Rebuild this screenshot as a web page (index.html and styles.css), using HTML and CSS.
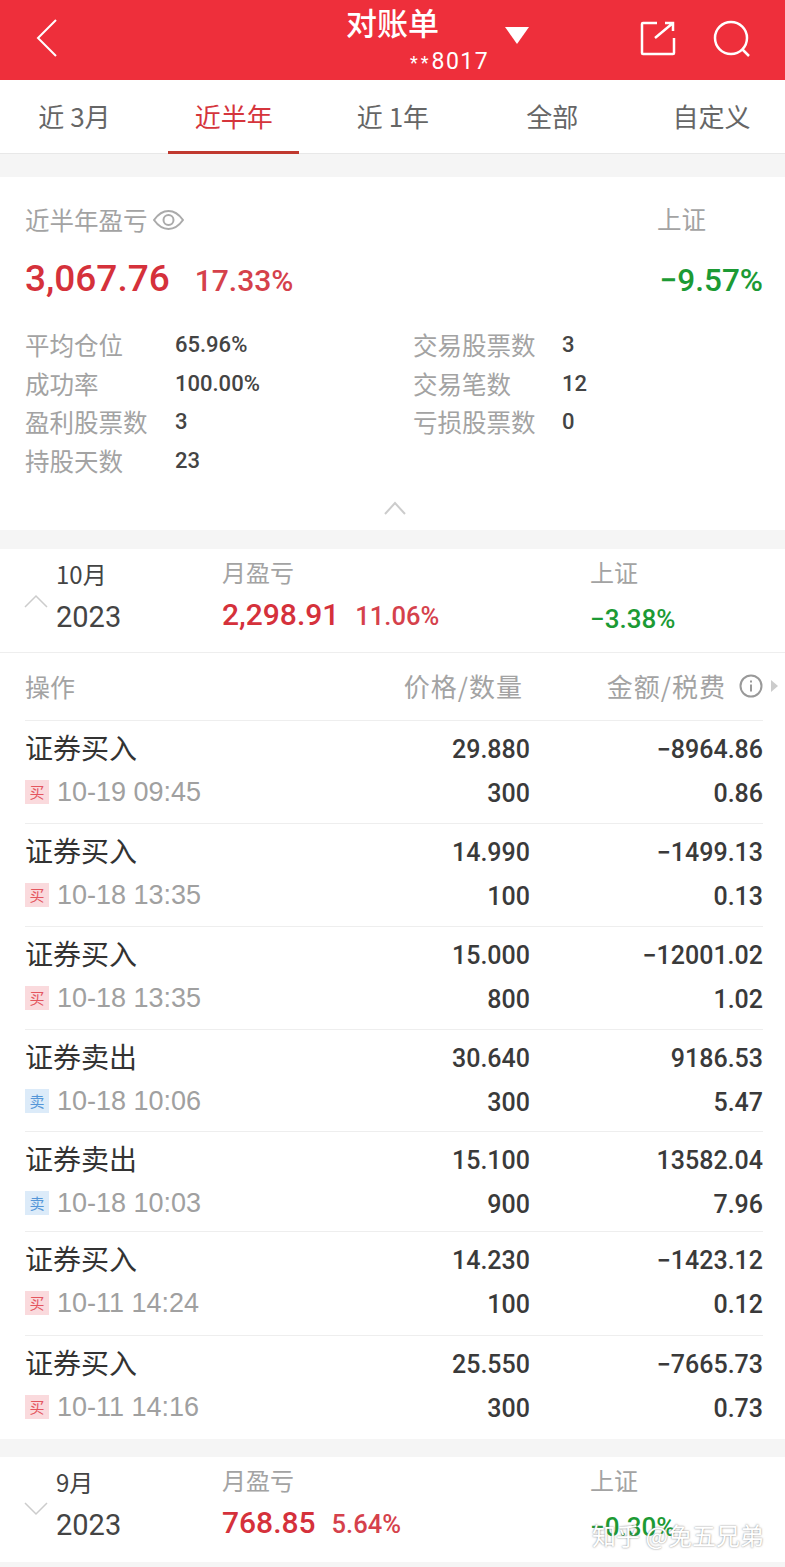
FILE: index.html
```html
<!DOCTYPE html>
<html lang="zh-CN">
  <head>
    <meta charset="UTF-8" />
    <meta name="viewport" content="width=device-width, initial-scale=1.0" />
    <title>对账单</title>
    <link rel="stylesheet" href="styles.css">
  </head>
  <body>
    <header class="topbar">
      <svg class="back-icon" width="24" height="40" viewBox="0 0 24 40"><path d="M21 2 3 20l18 18" /></svg>
      <div class="account">
        <div class="account-name">对账单</div>
        <div class="account-no"><span class="stars">**</span>8017</div>
      </div>
      <svg class="drop-icon" width="24" height="17" viewBox="0 0 24 17"><path d="M0 0h24L12 17z" /></svg>
      <div class="topbar-actions">
        <svg width="36" height="36" viewBox="0 0 36 36"><path d="M17 3H3a1 1 0 0 0-1 1v29a1 1 0 0 0 1 1h30a1 1 0 0 0 1-1V18M15 18 33 3M25 3h8v8" /></svg>
        <svg width="38" height="38" viewBox="0 0 38 38"><circle cx="18" cy="18" r="16" /><path d="m29 29 7 7" /></svg>
      </div>
    </header>

    <nav class="tabs">
      <div class="tab">近 3月</div>
      <div class="tab active">近半年</div>
      <div class="tab">近 1年</div>
      <div class="tab">全部</div>
      <div class="tab">自定义</div>
    </nav>

    <section class="summary">
      <div class="summary-head">
        <div class="summary-label">近半年盈亏
          <svg class="eye-icon" width="31" height="20" viewBox="0 0 31 20"><path d="M1 10C6 3 10 1 15.500 1S25 3 30 10c-5 7-9 9-14.500 9S6 17 1 10z" /><circle cx="15.500" cy="10" r="5" /></svg>
        </div>
        <div class="summary-label index-label">上证</div>
      </div>
      <div class="summary-main">
        <div class="big-money">3,067.76</div>
        <div class="big-rate">17.33%</div>
        <div class="big-index">−9.57%</div>
      </div>
      <div class="stats">
        <span>平均仓位</span><b>65.96%</b><span>交易股票数</span><b>3</b>
        <span>成功率</span><b>100.00%</b><span>交易笔数</span><b>12</b>
        <span>盈利股票数</span><b>3</b><span>亏损股票数</span><b>0</b>
        <span>持股天数</span><b>23</b>
      </div>
      <svg class="fold-icon" width="22" height="14" viewBox="0 0 22 14"><path d="m1 13 10-11 10 11" /></svg>
    </section>

    <section class="month">
      <svg class="month-arrow" width="24" height="14" viewBox="0 0 24 14"><path d="m1 13 11-11 11 11" /></svg>
      <div class="month-date"><div class="month-m">10月</div><div class="month-y">2023</div></div>
      <div class="month-profit">
        <div class="month-label">月盈亏</div>
        <div class="month-values"><span class="month-money">2,298.91</span><span class="month-rate">11.06%</span></div>
      </div>
      <div class="month-index">
        <div class="month-label">上证</div>
        <div class="month-down">−3.38%</div>
      </div>
    </section>

    <section class="trades">
      <div class="trades-head">
        <div>操作</div>
        <div class="head-mid">价格/数量</div>
        <div class="head-right">金额/税费
          <svg class="info-icon" width="24" height="24" viewBox="0 0 24 24"><circle cx="12" cy="12" r="10.500" /><path d="M12 10.500v7M12 6.500v2" /></svg>
          <svg class="more-icon" width="7" height="12" viewBox="0 0 7 12"><path d="M0 0l7 6-7 6z" /></svg>
        </div>
      </div>

      <div class="trade">
        <div class="trade-name">证券买入</div><div class="num">29.880</div><div class="num">−8964.86</div>
        <div class="trade-time"><i class="badge buy">买</i>10-19 09:45</div><div class="num">300</div><div class="num">0.86</div>
      </div>
      <div class="trade">
        <div class="trade-name">证券买入</div><div class="num">14.990</div><div class="num">−1499.13</div>
        <div class="trade-time"><i class="badge buy">买</i>10-18 13:35</div><div class="num">100</div><div class="num">0.13</div>
      </div>
      <div class="trade">
        <div class="trade-name">证券买入</div><div class="num">15.000</div><div class="num">−12001.02</div>
        <div class="trade-time"><i class="badge buy">买</i>10-18 13:35</div><div class="num">800</div><div class="num">1.02</div>
      </div>
      <div class="trade">
        <div class="trade-name">证券卖出</div><div class="num">30.640</div><div class="num">9186.53</div>
        <div class="trade-time"><i class="badge sell">卖</i>10-18 10:06</div><div class="num">300</div><div class="num">5.47</div>
      </div>
      <div class="trade">
        <div class="trade-name">证券卖出</div><div class="num">15.100</div><div class="num">13582.04</div>
        <div class="trade-time"><i class="badge sell">卖</i>10-18 10:03</div><div class="num">900</div><div class="num">7.96</div>
      </div>
      <div class="trade">
        <div class="trade-name">证券买入</div><div class="num">14.230</div><div class="num">−1423.12</div>
        <div class="trade-time"><i class="badge buy">买</i>10-11 14:24</div><div class="num">100</div><div class="num">0.12</div>
      </div>
      <div class="trade">
        <div class="trade-name">证券买入</div><div class="num">25.550</div><div class="num">−7665.73</div>
        <div class="trade-time"><i class="badge buy">买</i>10-11 14:16</div><div class="num">300</div><div class="num">0.73</div>
      </div>
    </section>

    <section class="month month-last">
      <svg class="month-arrow" width="24" height="14" viewBox="0 0 24 14"><path d="m1 1 11 11 11-11" /></svg>
      <div class="month-date"><div class="month-m">9月</div><div class="month-y">2023</div></div>
      <div class="month-profit">
        <div class="month-label">月盈亏</div>
        <div class="month-values"><span class="month-money">768.85</span><span class="month-rate">5.64%</span></div>
      </div>
      <div class="month-index">
        <div class="month-label">上证</div>
        <div class="month-down">−0.30%</div>
      </div>
    </section>

    <div class="watermark">知乎 @免五兄弟</div>
  </body>
</html>
```

FILE: styles.css
```css
* {
  margin: 0;
  padding: 0;
  box-sizing: border-box;
}
body {
  position: relative;
  height: 1567px;
  overflow: hidden;
  background-color: #f5f5f5;
  font-family: "Noto Sans CJK SC", "Liberation Sans", sans-serif;
  color: #333;
}
svg {
  fill: none;
  display: block;
}

/* top red bar */
.topbar {
  height: 80px;
  background-color: #ee2f3b;
  display: flex;
  align-items: flex-start;
  color: #fff;
}
.topbar svg {
  stroke: #fff;
  stroke-width: 2.500;
}
.topbar .back-icon {
  stroke-width: 2;
  margin: 18px 0 0 35px;
}
.account {
  margin-left: 287px;
  width: 142px;
}
.account-name {
  font-size: 31px;
  font-weight: 500;
  line-height: 36px;
  margin-top: 4px;
}
.account-no {
  font-family: Roboto, sans-serif;
  font-size: 23px;
  line-height: 26px;
  letter-spacing: 1.500px;
  margin: 9px 0 0 64px;
  white-space: nowrap;
}
.stars {
  font-size: 18px;
  letter-spacing: 3px;
}
.topbar .drop-icon {
  fill: #fff;
  stroke: none;
  margin: 27px 0 0 17px;
}
.topbar-actions {
  margin-left: auto;
  padding: 20px 34px 0 0;
  display: flex;
  gap: 37px;
}

/* period tabs */
.tabs {
  height: 74px;
  background-color: #fff;
  border-bottom: 1px solid #e8e8e8;
  display: flex;
  justify-content: space-between;
  padding: 0 8px 0 9px;
}
.tab {
  width: 131px;
  text-align: center;
  font-size: 26px;
  line-height: 72px;
  color: #666;
}
.tab.active {
  color: #d5353c;
  height: 74px;
  border-bottom: 3px solid #c0392f;
}

/* half year summary */
.summary {
  position: relative;
  margin-top: 23px;
  height: 353px;
  background-color: #fff;
  padding: 25px 22px 0 25px;
}
.summary-head {
  display: flex;
  justify-content: space-between;
}
.summary-label {
  display: flex;
  align-items: center;
  gap: 5px;
  font-size: 24.500px;
  line-height: 36px;
  color: #a3a3a3;
}
.eye-icon {
  stroke: #aaa;
  stroke-width: 2;
}
.index-label {
  margin: -2px 57px 0 0;
}
.summary-main {
  display: flex;
  align-items: baseline;
  font-family: Roboto, sans-serif;
  font-weight: 500;
  margin-top: 19px;
  height: 46px;
}
.big-money {
  font-size: 37px;
  color: #d5313b;
}
.big-rate {
  font-size: 30px;
  margin-left: 25px;
  color: #d5414b;
}
.big-index {
  font-size: 31.500px;
  margin-left: auto;
  color: #1c9a34;
}
.stats {
  display: grid;
  grid-template-columns: 150px 238px 149px 1fr;
  grid-auto-rows: 38.700px;
  align-items: center;
  margin-top: 22px;
  font-size: 24.500px;
  color: #a3a3a3;
}
.stats b {
  font-family: Roboto, sans-serif;
  font-weight: 500;
  font-size: 22px;
  color: #444;
}
.fold-icon {
  position: absolute;
  left: 384px;
  top: 324px;
  stroke: #ccc;
  stroke-width: 2;
}

/* month rows */
.month {
  display: flex;
  margin-top: 19px;
  height: 104px;
  background-color: #fff;
  border-bottom: 1px solid #eee;
  padding-left: 24px;
}
.month-arrow {
  stroke: #ccc;
  stroke-width: 1.500;
  margin-top: 45px;
}
.month-date {
  width: 166px;
  margin-left: 8px;
  padding-top: 7px;
}
.month-m {
  font-size: 24px;
  line-height: 36px;
  color: #444;
}
.month-y {
  font-family: Roboto, sans-serif;
  font-size: 29px;
  line-height: 50px;
  color: #444;
}
.month-profit {
  width: 368px;
  padding-top: 5px;
}
.month-label {
  font-size: 24px;
  line-height: 36px;
  color: #a3a3a3;
}
.month-values {
  display: flex;
  align-items: baseline;
  gap: 16px;
  font-family: Roboto, sans-serif;
  font-weight: 500;
  line-height: 50px;
}
.month-money {
  font-size: 30px;
  color: #d5313b;
}
.month-rate {
  font-size: 25.500px;
  color: #d5414b;
}
.month-index {
  padding-top: 5px;
}
.month-down {
  font-family: Roboto, sans-serif;
  font-weight: 500;
  font-size: 26px;
  line-height: 58px;
  color: #1c9a34;
}
.month-last {
  margin-top: 18px;
  border-bottom: none;
  height: 105px;
}

/* trades table */
.trades {
  background-color: #fff;
  padding: 0 22px 0 25px;
}
.trades-head {
  height: 68px;
  display: grid;
  grid-template-columns: 1fr 200px 233px;
  align-items: center;
  font-size: 25px;
  color: #a3a3a3;
  padding-bottom: 2px;
  border-bottom: 1px solid #eee;
}
.head-mid {
  margin-right: 7px;
  font-size: 26px;
  letter-spacing: 1px;
  text-align: right;
}
.head-right {
  position: relative;
  display: flex;
  justify-content: flex-end;
  padding-right: 37px;
  font-size: 26px;
  letter-spacing: 1px;
}
.info-icon {
  position: absolute;
  right: 0;
  top: 7px;
  stroke: #999;
  stroke-width: 2;
}
.more-icon {
  position: absolute;
  right: -15px;
  top: 13px;
  fill: #ccc;
}
.trade {
  height: 103px;
  display: grid;
  grid-template-columns: 1fr 200px 233px;
  grid-template-rows: 45px 42px;
  align-items: center;
  padding-top: 6px;
  border-bottom: 1px solid #eee;
}
.trade:nth-child(5) {
  height: 102px;
}
.trade:nth-child(6) {
  height: 100px;
}
.trade:nth-child(7) {
  height: 104px;
}
.trade:last-child {
  border-bottom: none;
}
.trade-name {
  font-size: 28px;
  color: #333;
  padding-bottom: 6px;
}
.trade-time {
  display: flex;
  align-items: center;
  gap: 8px;
  font-family: "Liberation Sans", sans-serif;
  font-size: 27px;
  color: #a0a0a0;
  padding-bottom: 2px;
}
.num {
  font-family: Roboto, sans-serif;
  font-weight: 500;
  font-size: 25px;
  text-align: right;
  color: #3a3a3a;
}
.badge {
  width: 24px;
  height: 24px;
  font-family: "Noto Sans CJK SC", sans-serif;
  font-style: normal;
  font-size: 15px;
  line-height: 24px;
  text-align: center;
}
.buy {
  background-color: #fadadd;
  color: #e4565f;
}
.sell {
  background-color: #dcebf9;
  color: #5596d8;
}

.watermark {
  position: absolute;
  left: 592px;
  top: 1518px;
  font-size: 24px;
  line-height: 34px;
  color: #fff;
  text-shadow: 0 0 2px #777;
  white-space: nowrap;
}
```
